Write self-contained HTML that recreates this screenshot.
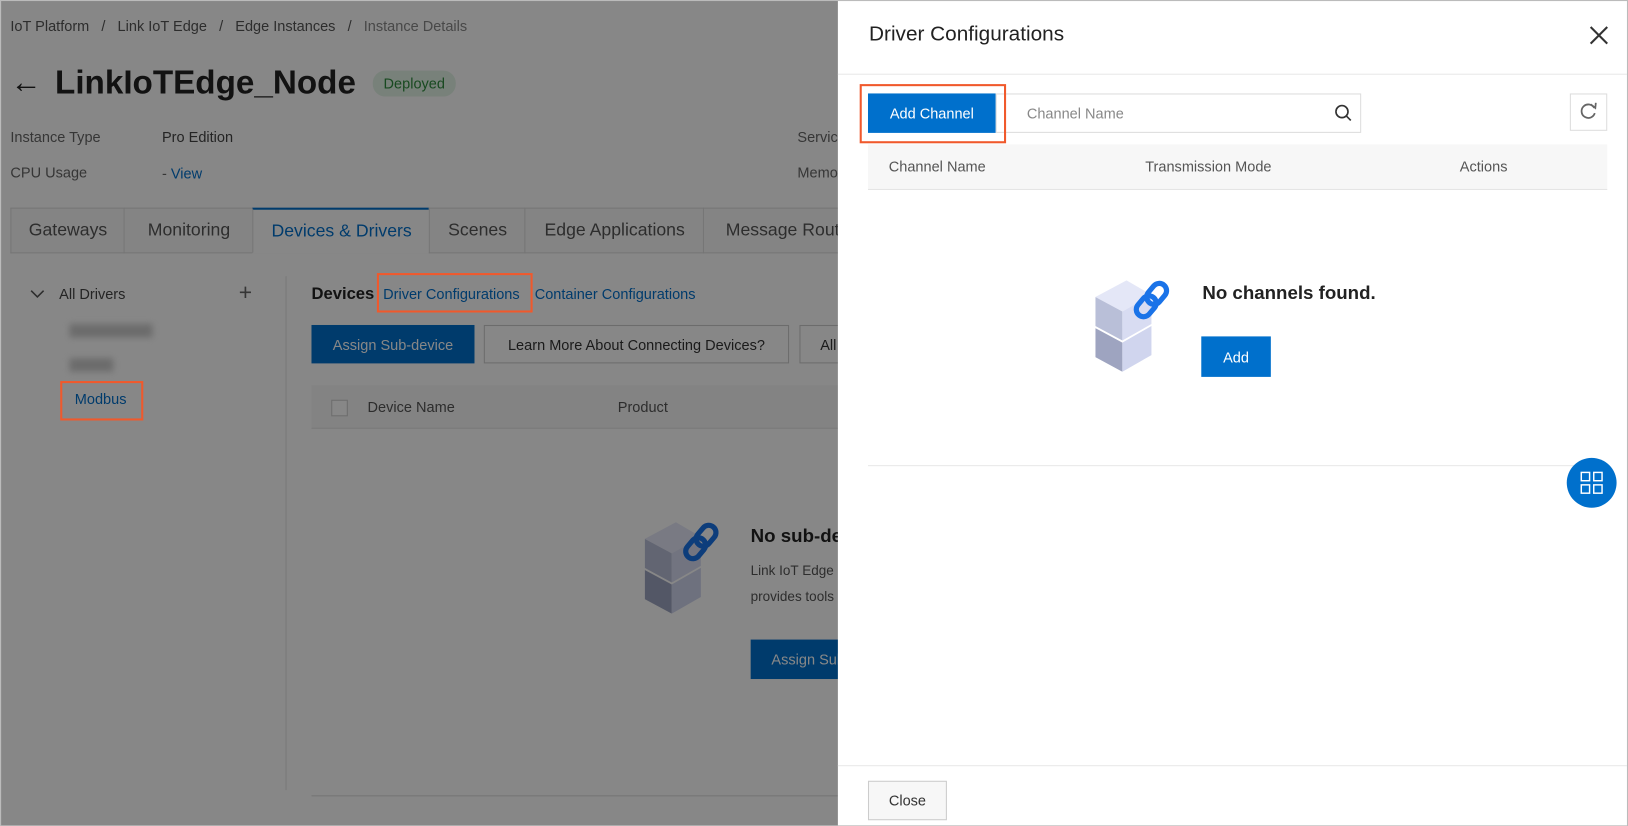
<!DOCTYPE html>
<html><head><meta charset="utf-8"><style>
*{box-sizing:border-box;margin:0;padding:0}
html,body{width:1628px;height:826px;overflow:hidden;background:#fff;font-family:"Liberation Sans",sans-serif;color:#333}
#root{position:absolute;left:0;top:0;width:1568px;height:796px;transform:scale(1.03827);transform-origin:0 0;overflow:hidden;border:1px solid #bbb}
.a{position:absolute;white-space:nowrap}
.ov{position:absolute;left:0;top:0;width:1568px;height:796px;background:rgba(0,0,0,0.47)}
.btnb{position:absolute;background:#0070cc;color:#fff;font-size:14px;display:flex;align-items:center;justify-content:center;white-space:nowrap;overflow:hidden}
.btnw{position:absolute;background:#fff;border:1px solid #ccc;color:#333;font-size:14px;display:flex;align-items:center;justify-content:center;white-space:nowrap;overflow:hidden}
.tab{position:absolute;top:199px;height:44px;border:1px solid #ddd;border-right:none;font-size:17px;color:#555;display:flex;align-items:center;justify-content:center;background:#fafafa;white-space:nowrap;overflow:hidden}
.ob{position:absolute;border:2px solid #f0592c}
</style></head><body><div id="root">
<div class="a" style="left:9px;top:16px;font-size:14px;color:#555">IoT Platform &nbsp; / &nbsp; Link IoT Edge &nbsp; / &nbsp; Edge Instances &nbsp; / &nbsp; <span style="color:#888">Instance Details</span></div>
<div class="a" style="left:9px;top:62px;font-size:30px;color:#222">&#8592;</div>
<div class="a" style="left:52px;top:60px;font-size:32px;font-weight:bold;color:#222">LinkIoTEdge_Node</div>
<div class="a" style="left:358px;top:67px;width:80px;height:25px;border-radius:12px;background:#e3f4e6;color:#2e8b3d;font-size:14px;text-align:center;line-height:25px">Deployed</div>
<div class="a" style="left:9px;top:123px;font-size:14px;color:#666">Instance Type</div>
<div class="a" style="left:155px;top:123px;font-size:14px;color:#444">Pro Edition</div>
<div class="a" style="left:9px;top:157px;font-size:14px;color:#666">CPU Usage</div>
<div class="a" style="left:155px;top:158px;font-size:14px;color:#0070cc"><span style="color:#666">- </span>View</div>
<div class="a" style="left:767px;top:123px;font-size:14px;color:#666">Service</div>
<div class="a" style="left:767px;top:157px;font-size:14px;color:#666">Memory</div>
<div class="a" style="left:9px;top:242px;width:800px;height:1px;background:#ddd"></div>
<div class="tab" style="left:9px;width:110px">Gateways</div>
<div class="tab" style="left:118px;width:125px">Monitoring</div>
<div class="tab" style="left:242px;width:171px;background:#fff;border-top:2px solid #0070cc;border-bottom:1px solid #fff;color:#0070cc">Devices &amp; Drivers</div>
<div class="tab" style="left:412px;width:93px">Scenes</div>
<div class="tab" style="left:504px;width:173px">Edge Applications</div>
<div class="tab" style="left:676px;width:160px;justify-content:flex-start;padding-left:21px">Message Routing</div>
<svg class="a" style="left:28px;top:277px" width="14" height="10"><path d="M1 2L7 8 13 2" stroke="#555" stroke-width="1.5" fill="none"/></svg>
<div class="a" style="left:56px;top:274px;font-size:14px;color:#444">All Drivers</div>
<div class="a" style="left:229px;top:268px;font-size:22px;color:#666">+</div>
<div class="a" style="left:274px;top:265px;width:1px;height:495px;background:#e5e5e5"></div>
<div class="a" style="left:66px;top:311px;width:80px;height:13px;background:#ccc;filter:blur(3px)"></div>
<div class="a" style="left:66px;top:344px;width:42px;height:13px;background:#ccc;filter:blur(3px)"></div>
<div class="a" style="left:71px;top:375px;font-size:14px;color:#0070cc">Modbus</div>
<div class="a" style="left:299px;top:274px;font-size:16px;font-weight:bold;color:#222">Devices</div>
<div class="a" style="left:368px;top:274px;font-size:14px;color:#0070cc">Driver Configurations</div>
<div class="a" style="left:514px;top:274px;font-size:14px;color:#0070cc">Container Configurations</div>
<div class="btnb" style="left:299px;top:312px;width:157px;height:37px">Assign Sub-device</div>
<div class="btnw" style="left:465px;top:312px;width:294px;height:37px">Learn More About Connecting Devices?</div>
<div class="btnw" style="left:769px;top:312px;width:80px;height:37px;justify-content:flex-start;padding-left:19px">All</div>
<div class="a" style="left:299px;top:370px;width:520px;height:42px;background:#f7f7f7;border-bottom:1px solid #e5e5e5"></div>
<div class="a" style="left:318px;top:384px;width:16px;height:16px;border:1px solid #ccc;background:#fff"></div>
<div class="a" style="left:353px;top:383px;font-size:14px;color:#555">Device Name</div>
<div class="a" style="left:594px;top:383px;font-size:14px;color:#555">Product</div>
<svg class="a" style="left:620px;top:498px" width="80" height="92" viewBox="0 0 80 92"><polygon points="0,20 30,4 54,18 26,34" fill="#e4e7f7"/><polygon points="0,20 26,34 26,62 0,48" fill="#b9bfd8"/><polygon points="26,34 54,18 54,46 26,62" fill="#d8dcf2"/><polygon points="0,50 26,64 26,92 0,78" fill="#9ea4c0"/><polygon points="26,64 54,48 54,76 26,92" fill="#d0d5ee"/><g stroke="#1a73e8" stroke-width="5" fill="none"><rect x="52" y="6" width="14" height="22" rx="7" transform="rotate(40 59 17)"/><rect x="42" y="18" width="14" height="22" rx="7" transform="rotate(40 49 29)"/></g></svg>
<div class="a" style="left:722px;top:505px;font-size:18px;font-weight:bold;color:#222">No sub-devices found.</div>
<div class="a" style="left:722px;top:541px;font-size:13px;color:#555">Link IoT Edge</div>
<div class="a" style="left:722px;top:566px;font-size:13px;color:#555">provides tools</div>
<div class="btnb" style="left:722px;top:615px;width:120px;height:38px;justify-content:flex-start;padding-left:20px">Assign Sub-device</div>
<div class="a" style="left:299px;top:765px;width:520px;height:1px;background:#ddd"></div>
<div class="ov"></div>
<div class="ob" style="left:362px;top:262px;width:150px;height:38px"></div>
<div class="ob" style="left:57px;top:366px;width:80px;height:38px"></div>
<div class="a" style="left:806px;top:0;width:762px;height:796px;background:#fff">
 <div class="a" style="left:30px;top:21px;font-size:20px;color:#222">Driver Configurations</div>
 <svg class="a" style="left:724px;top:24px" width="18" height="18"><path d="M1 1L17 17M17 1L1 17" stroke="#333" stroke-width="2"/></svg>
 <div class="a" style="left:0;top:70px;width:762px;height:1px;background:#e8e8e8"></div>
 <div class="btnb" style="left:29px;top:89px;width:123px;height:38px">Add Channel</div>
 <div class="a" style="left:152px;top:89px;width:352px;height:38px;border:1px solid #ddd;font-size:14px;color:#888;padding:10px 0 0 29px">Channel Name</div>
 <svg class="a" style="left:478px;top:99px" width="18" height="18"><circle cx="7.5" cy="7.5" r="5.8" stroke="#333" stroke-width="1.6" fill="none"/><path d="M11.8 11.8L16 16" stroke="#333" stroke-width="1.6"/></svg>
 <div class="a" style="left:705px;top:89px;width:36px;height:36px;border:1px solid #ddd"></div>
 <svg class="a" style="left:714px;top:97px" width="18" height="18"><path d="M14.5 6A6.5 6.5 0 1 0 15 11" stroke="#666" stroke-width="1.7" fill="none"/><path d="M11 2.5L15.5 6 16 1" stroke="#666" stroke-width="1.7" fill="none"/></svg>
 <div class="a" style="left:29px;top:138px;width:712px;height:44px;background:#f7f7f7;border-bottom:1px solid #e5e5e5"></div>
 <div class="a" style="left:49px;top:151px;font-size:14px;color:#555">Channel Name</div>
 <div class="a" style="left:296px;top:151px;font-size:14px;color:#555">Transmission Mode</div>
 <div class="a" style="left:599px;top:151px;font-size:14px;color:#555">Actions</div>
 <svg class="a" style="left:248px;top:265px" width="80" height="92" viewBox="0 0 80 92"><polygon points="0,20 30,4 54,18 26,34" fill="#e4e7f7"/><polygon points="0,20 26,34 26,62 0,48" fill="#b9bfd8"/><polygon points="26,34 54,18 54,46 26,62" fill="#d8dcf2"/><polygon points="0,50 26,64 26,92 0,78" fill="#9ea4c0"/><polygon points="26,64 54,48 54,76 26,92" fill="#d0d5ee"/><g stroke="#1a73e8" stroke-width="5" fill="none"><rect x="52" y="6" width="14" height="22" rx="7" transform="rotate(40 59 17)"/><rect x="42" y="18" width="14" height="22" rx="7" transform="rotate(40 49 29)"/></g></svg>
 <div class="a" style="left:351px;top:271px;font-size:18px;font-weight:bold;color:#222">No channels found.</div>
 <div class="btnb" style="left:350px;top:323px;width:67px;height:39px">Add</div>
 <div class="a" style="left:29px;top:447px;width:712px;height:1px;background:#e8e8e8"></div>
 <div class="a" style="left:702px;top:440px;width:48px;height:48px;border-radius:50%;background:#0070cc"></div>
 <svg class="a" style="left:715px;top:453px" width="22" height="22"><g stroke="#fff" stroke-width="1.4" fill="none"><rect x="1" y="1" width="8" height="8"/><rect x="13" y="1" width="8" height="8"/><rect x="1" y="13" width="8" height="8"/><rect x="13" y="13" width="8" height="8"/></g></svg>
 <div class="a" style="left:0;top:736px;width:762px;height:1px;background:#e8e8e8"></div>
 <div class="btnw" style="left:29px;top:751px;width:76px;height:38px;background:#f7f7f7">Close</div>
</div>
<div class="ob" style="left:827px;top:80px;width:141px;height:57px"></div>
</div></body></html>
